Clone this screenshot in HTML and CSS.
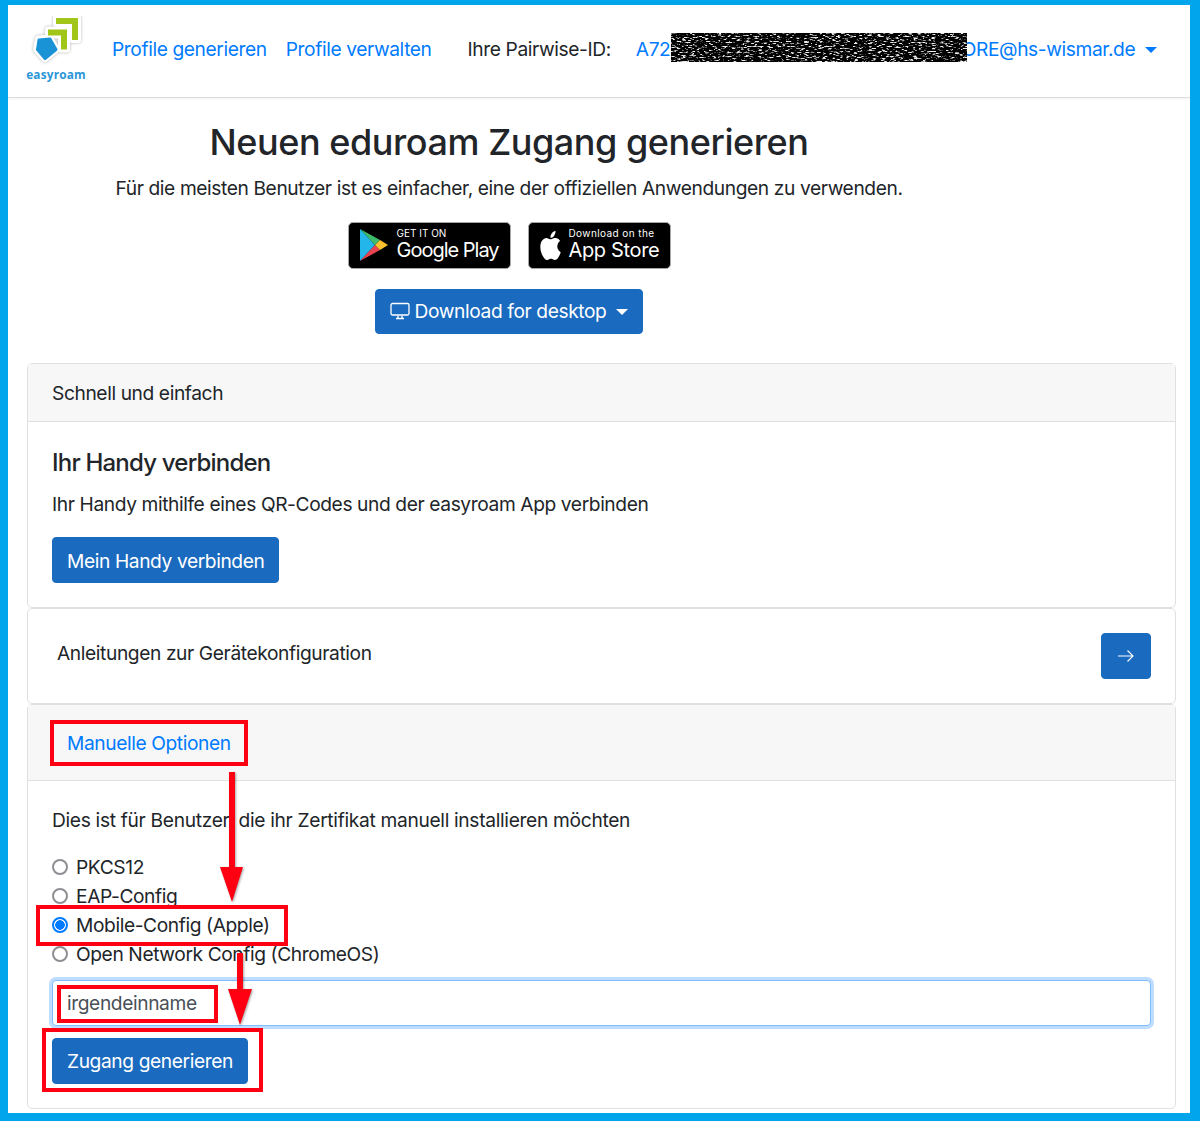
FILE: index.html
```html
<!DOCTYPE html>
<html lang="de">
<head>
  <meta charset="UTF-8">
  <title>easyroam</title>
  <link rel="stylesheet" href="styles.css">
</head>
<body>
  <div class="frame">

    <!-- Top navigation -->
    <nav class="navbar">
      <a class="brand">
        <svg class="brand-logo" viewBox="0 0 58 50" width="58" height="50">
          <g class="brand-sticker">
            <polygon points="29,2 51,2 51,24 45,24 45,8 29,8"/>
            <polygon points="21,13.5 40,13.5 40,33.5 34,33.5 34,19.5 21,19.5"/>
            <polygon points="11,22.5 23,21.5 30,33.5 18,43.5 9,33.5"/>
          </g>
          <polygon class="brand-green" points="29,2 51,2 51,24 45,24 45,8 29,8"/>
          <polygon class="brand-green" points="21,13.5 40,13.5 40,33.5 34,33.5 34,19.5 21,19.5"/>
          <polygon class="brand-blue" points="12,24 23,23 29,33.5 18,42.5 10.5,33.5"/>
        </svg>
        <span class="brand-name">easyroam</span>
      </a>
      <a class="nav-link">Profile generieren</a>
      <a class="nav-link">Profile verwalten</a>
      <span class="pairwise-label">Ihre Pairwise-ID:</span>
      <a class="nav-link user-link">A72C<span class="id-gap"></span>CORE@hs-wismar.de<span class="caret"></span></a>
    </nav>

    <main class="content">
      <!-- Intro -->
      <div class="intro">
        <h1>Neuen eduroam Zugang generieren</h1>
        <p>Für die meisten Benutzer ist es einfacher, eine der offiziellen Anwendungen zu verwenden.</p>
        <div class="stores">
          <a class="store store-google">
            <svg viewBox="0 0 30 34" width="30" height="34">
              <polygon points="1,1 16,17 1,33" fill="#22b6ea"/>
              <polygon points="1,1 21,12 16,17" fill="#3dbb6c"/>
              <polygon points="1,33 21,22 16,17" fill="#ea4452"/>
              <polygon points="21,12 29,17 21,22 16,17" fill="#fbc02d"/>
            </svg>
            <span class="store-text">
              <small>GET IT ON</small>
              <b>Google Play</b>
            </span>
          </a>
          <a class="store store-apple">
            <svg viewBox="0 0 16 16" width="25" height="29" preserveAspectRatio="none">
              <path fill="#fff" d="M11.182.008C11.148-.03 9.923.023 8.857 1.18c-1.066 1.156-.902 2.482-.878 2.516s1.52.087 2.475-1.258.762-2.391.728-2.43m3.314 11.733c-.048-.096-2.325-1.234-2.113-3.422s1.675-2.789 1.698-2.854-.597-.79-1.254-1.157a3.7 3.7 0 0 0-1.563-.434c-.108-.003-.483-.095-1.254.116-.508.139-1.653.589-1.968.607-.316.018-1.256-.522-2.267-.665-.647-.1-1.333.105-1.824.302-.49.197-1.422.758-2.074 2.241-.652 1.482-.311 3.83-.067 4.56s.625 1.924 1.273 2.796c.576.984 1.34 1.667 1.659 1.899s1.219.386 1.843.067c.502-.308 1.408-.485 1.766-.472.357.013 1.061.154 1.782.539.571.197 1.111.115 1.652-.105.541-.221 1.324-1.059 2.238-2.758q.52-1.185.473-1.282"/>
            </svg>
            <span class="store-text">
              <small>Download on the</small>
              <b>App Store</b>
            </span>
          </a>
        </div>
        <button class="btn btn-desktop">
          <svg class="btn-icon" viewBox="0 0 20 18" width="20" height="18">
            <rect x="1" y="1.5" width="18" height="11.5" rx="1.5" fill="none" stroke="#fff" stroke-width="1.3"/>
            <path d="M8 13.5v2.5M12 13.5v2.5M6 16.5h8" fill="none" stroke="#fff" stroke-width="1.3"/>
          </svg>
          Download for desktop<span class="caret caret-btn"></span>
        </button>
      </div>

      <!-- Quick connect -->
      <section class="card">
        <div class="card-header">Schnell und einfach</div>
        <div class="card-body">
          <h5>Ihr Handy verbinden</h5>
          <p>Ihr Handy mithilfe eines QR-Codes und der easyroam App verbinden</p>
          <button class="btn">Mein Handy verbinden</button>
        </div>
      </section>

      <!-- Device guides -->
      <section class="card">
        <div class="card-body guide-row">
          <span class="guide-text">Anleitungen zur Gerätekonfiguration</span>
          <button class="btn btn-arrow">
            <svg viewBox="0 0 18 14" width="18" height="14">
              <path d="M1 7h15M10.5 1.5 16 7l-5.5 5.5" fill="none" stroke="#fff" stroke-width="1.1"/>
            </svg>
          </button>
        </div>
      </section>

      <!-- Manual options -->
      <section class="card">
        <div class="card-header card-header-link"><a class="btn-link">Manuelle Optionen</a></div>
        <div class="card-body">
          <p class="lead">Dies ist für Benutzer, die ihr Zertifikat manuell installieren möchten</p>
          <div class="radio-row"><span class="radio"></span>PKCS12</div>
          <div class="radio-row"><span class="radio"></span>EAP-Config</div>
          <div class="radio-row"><span class="radio radio-on"></span>Mobile-Config (Apple)</div>
          <div class="radio-row"><span class="radio"></span>Open Network Config (ChromeOS)</div>
          <input class="name-input" type="text" value="irgendeinname">
          <button class="btn">Zugang generieren</button>
        </div>
      </section>
    </main>
  </div>

  <!-- Annotations drawn on top of the screenshot -->
  <svg class="overlay" viewBox="0 0 1200 1121" width="1200" height="1121">
    <defs>
      <filter id="noise" x="0" y="0" width="100%" height="100%">
        <feTurbulence type="fractalNoise" baseFrequency="0.22 0.8" numOctaves="3" seed="7"/>
        <feColorMatrix values="0 0 0 0 0.85  0 0 0 0 0.85  0 0 0 0 0.85  6 0 0 0 -3.2"/>
      </filter>
    </defs>
    <rect x="671" y="33" width="296" height="29" fill="#000"/>
    <rect x="671" y="33" width="296" height="29" fill="#fff" filter="url(#noise)"/>

    <g class="marks">
      <rect x="52" y="722" width="194" height="42"/>
      <rect x="38" y="907" width="248" height="37"/>
      <rect x="59" y="987" width="157" height="34"/>
      <rect x="44" y="1030" width="217" height="60"/>
    </g>
    <g class="arrows">
      <polygon points="229,772 235,772 235,867 243,867 232,902 220,867 229,867"/>
      <polygon points="237,953 243,953 243,989 252,989 240,1025 228,989 237,989"/>
    </g>
  </svg>
</body>
</html>
```

FILE: styles.css
```css
html {
  font-size: 19.2px;
}

body {
  margin: 0;
  font-family: Inter, "Liberation Sans", sans-serif;
  font-size: 1rem;
  line-height: 1.5;
  color: #212529;
  letter-spacing: -0.4px;
}

.frame {
  box-sizing: border-box;
  width: 1200px;
  height: 1121px;
  overflow: hidden;
  background: #fff;
  border-style: solid;
  border-color: #00a5ec;
  border-width: 5px 10px 8px 8px;
}

/* Navbar */
.navbar {
  display: flex;
  align-items: center;
  height: 93px;
  box-sizing: border-box;
  padding-left: 18px;
  padding-bottom: 3px;
  border-bottom: 1px solid #ddd;
  box-shadow: 0 1px 3px rgba(0, 0, 0, 0.06);
}

.brand {
  display: flex;
  flex-direction: column;
  align-items: center;
  width: 60px;
  margin-right: 26px;
  margin-bottom: 4px;
}

.brand-logo {
  display: block;
  margin-top: 2px;
}

.brand-sticker {
  fill: #fff;
  stroke: #fff;
  stroke-width: 6px;
  stroke-linejoin: round;
  filter: drop-shadow(0 0 1.5px rgba(0, 0, 0, 0.3));
}

.brand-green {
  fill: #a2c617;
}

.brand-blue {
  fill: #1a93d6;
  stroke: #1a93d6;
  stroke-width: 3px;
  stroke-linejoin: round;
}

.brand-name {
  font-family: "Open Sans", sans-serif;
  font-size: 11.8px;
  font-weight: 700;
  line-height: 16px;
  letter-spacing: 0.2px;
  color: #2a96d6;
}

.nav-link {
  color: #007bff;
  margin-right: 19px;
  white-space: nowrap;
}

.pairwise-label {
  margin-left: 17px;
  margin-right: 25px;
  white-space: nowrap;
}

.user-link {
  margin-right: 0;
}

.id-gap {
  display: inline-block;
  width: 264px;
}

.caret {
  display: inline-block;
  margin-left: 10px;
  vertical-align: 3px;
  border-top: 6px solid currentColor;
  border-left: 6px solid transparent;
  border-right: 6px solid transparent;
}

/* Main column */
.content {
  padding: 0 14px 0 19px;
}

.intro {
  width: 964px;
  text-align: center;
  padding-top: 21px;
  margin-bottom: 29px;
}

.intro p {
  margin-bottom: 19.2px;
}

h1 {
  margin: 0 0 7.6px;
  font-size: 36px;
  font-weight: 500;
  line-height: 46px;
  letter-spacing: -0.45px;
}

p {
  margin: 0 0 18.2px;
  padding-top: 1px;
}

.lead {
  letter-spacing: -0.32px;
}

.stores {
  display: flex;
  justify-content: center;
  gap: 17px;
  margin-bottom: 20px;
}

.store {
  display: flex;
  align-items: center;
  box-sizing: border-box;
  height: 47px;
  background: #000;
  border: 1px solid #a6a6a6;
  border-radius: 5px;
  color: #fff;
  text-align: left;
}

.store-google {
  width: 163px;
  padding-left: 10px;
  gap: 8px;
}

.store-apple {
  width: 143px;
  padding-left: 9px;
  gap: 6px;
}

.store-text {
  display: flex;
  flex-direction: column;
}

.store-text small {
  font-size: 10px;
  line-height: 11px;
  letter-spacing: 0;
}

.store-apple small {
  letter-spacing: 0.4px;
}

.store-text b {
  font-size: 20px;
  font-weight: 400;
  line-height: 23px;
  letter-spacing: -1px;
}

.store-apple b {
  letter-spacing: -0.35px;
}

/* Buttons */
.btn {
  display: inline-block;
  box-sizing: border-box;
  height: 46px;
  padding: 2px 14px 0;
  background: #1a6bbf;
  border: 1px solid #1a6bbf;
  border-radius: 4px;
  color: #fff;
  font: inherit;
  letter-spacing: inherit;
}

.btn-desktop {
  height: 45px;
  padding-top: 0;
}

.btn-icon {
  vertical-align: -2px;
}

.caret-btn {
  vertical-align: 3px;
}

.btn-arrow {
  width: 50px;
  padding: 0;
}

.btn-arrow svg {
  display: block;
  margin: 0 auto;
}

.btn-link {
  display: block;
  padding: 9.5px 15px 7.5px;
  color: #007bff;
}

/* Cards */
.card {
  background: #fff;
  border: 1px solid #e0e0e0;
  border-radius: 5px;
}

.card-header {
  padding: 15.4px 1.25rem 13.4px;
  background: #f7f7f7;
  border-bottom: 1px solid #e0e0e0;
}

.card-header-link {
  padding: 0.75rem 1.25rem;
}

.card-body {
  padding: 1.25rem;
}

h5 {
  margin: 3px 0 11.4px;
  font-size: 1.25rem;
  font-weight: 500;
  line-height: 1.2;
  letter-spacing: -0.8px;
}

.guide-row {
  display: flex;
  justify-content: space-between;
  align-items: flex-start;
}

.guide-text {
  padding-left: 5px;
  padding-top: 6px;
}

/* Manual form */
.radio-row {
  display: flex;
  align-items: center;
  gap: 8px;
  height: 29px;
}

.radio {
  box-sizing: border-box;
  width: 16px;
  height: 16px;
  background: #fff;
  border: 2px solid #8e8e93;
  border-radius: 50%;
}

.radio-on {
  border: 2px solid #007bff;
  background: radial-gradient(circle, #007bff 0 4.5px, #fff 5px);
}

.name-input {
  display: block;
  box-sizing: border-box;
  width: 100%;
  height: 46px;
  margin: 11px 0 12px;
  padding: 0 14px;
  border: 1px solid #80bdff;
  border-radius: 4px;
  box-shadow: 0 0 0 3px rgba(0, 123, 255, 0.25);
  outline: none;
  color: #495057;
  font: inherit;
  letter-spacing: inherit;
}

/* Red markers and the blacked out ID */
.overlay {
  position: absolute;
  left: 0;
  top: 0;
}

.marks rect {
  fill: none;
  stroke: #ff0013;
  stroke-width: 4px;
}

.arrows polygon {
  fill: #ff0013;
  filter: drop-shadow(1px 1px 1px rgba(0, 0, 0, 0.35));
}
```
